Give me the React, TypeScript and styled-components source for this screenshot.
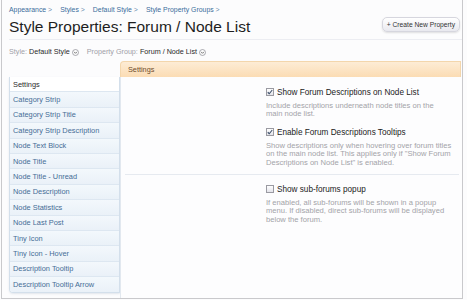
import styled, { createGlobalStyle } from 'styled-components';

const GlobalStyle = createGlobalStyle`
	html, body {
		margin: 0;
		padding: 0;
		background: #fcfcfd;
	}
	body {
		font-family: "Liberation Sans", Arial, sans-serif;
		color: #222;
	}
	* { box-sizing: border-box; }
`;

const Frame = styled.div`
	margin-left: 1px;
	width: 462px;
	height: 299px;
	display: flex;
	flex-direction: column;
	padding: 0 0 0 7px;
	border: 1px solid #c9c9cc;
	border-top: none;
	background: #fcfcfd;
`;

const Header = styled.header`
	padding: 5px 2px 3px 0;
	border-bottom: 1px solid #ecedf2;
`;

const Breadcrumb = styled.nav`
	display: flex;
	gap: 8px;
	font-size: 6.9px;
	line-height: 10px;
	color: #3b6c9c;
	margin-bottom: 2px;
`;

const Crumb = styled.span`
	white-space: nowrap;
	&::after {
		content: ' >';
		color: #6a8bab;
	}
`;

const TitleRow = styled.div`
	display: flex;
	justify-content: space-between;
	align-items: flex-start;
`;

const Title = styled.h1`
	margin: 0;
	font-size: 15.5px;
	line-height: 19px;
	font-weight: normal;
	color: #1e1e1e;
`;

const Button = styled.button`
	height: 15px;
	padding: 0 4px;
	border: 1px solid #d6d6de;
	border-radius: 5px;
	background: linear-gradient(#ffffff, #e9e9ef);
	box-shadow: 0 1px 2px rgba(0, 0, 0, 0.12);
	font-family: inherit;
	font-size: 6.7px;
	color: #333;
	white-space: nowrap;
`;

const StyleBar = styled.div`
	display: flex;
	align-items: center;
	gap: 8px;
	margin-top: 7px;
	font-size: 7.2px;
	line-height: 10px;
`;

const Chooser = styled.span`
	display: inline-flex;
	align-items: center;
	gap: 2px;
	white-space: nowrap;
`;

const ChooserLabel = styled.span`
	color: #a0a0a8;
`;

const ChooserValue = styled.span`
	color: #2a2a2a;
`;

const Main = styled.div`
	flex: 1;
	margin-top: 4px;
	display: grid;
	grid-template-columns: 111px 1fr;
	grid-template-rows: 16px 1fr;
`;

const Tab = styled.div`
	grid-column: 2;
	grid-row: 1;
	margin-right: 1px;
	padding-left: 7px;
	display: flex;
	align-items: center;
	border-top-left-radius: 4px;
	border: 1px solid #f3d6ac;
	border-bottom: none;
	background: linear-gradient(#fdecd5, #fbdcb4);
	font-size: 7.3px;
	color: #6f4d2d;
`;

const Sidebar = styled.ul`
	grid-column: 1;
	grid-row: 2;
	align-self: start;
	margin: 0;
	padding: 0;
	list-style: none;
	border: 1px solid #d3dfeb;
	border-top: none;
	border-bottom-left-radius: 4px;
	box-shadow: 0 1px 2px rgba(80, 110, 140, 0.15);
	overflow: hidden;
`;

const SideItem = styled.li<{ $header?: boolean }>`
	height: 15.4px;
	display: flex;
	align-items: center;
	padding-left: 3px;
	border-bottom: 1px solid #dde7f1;
	font-size: 7.4px;
	white-space: nowrap;
	background: ${p => (p.$header ? '#ffffff' : 'linear-gradient(#f3f8fc, #eaf1f8)')};
	color: ${p => (p.$header ? '#2b2b2b' : '#456d96')};
	&:last-child {
		border-bottom: none;
	}
`;

const Content = styled.section`
	grid-column: 2;
	grid-row: 2;
	padding: 0 3px 0 4px;
	border-left: 1px solid #e2e8ef;
	background: #fdfdfe;
`;

const Group = styled.div<{ $last?: boolean }>`
	padding: ${p => (p.$last ? '8.5px' : '9.5px')} 0 7px 141px;
	border-bottom: ${p => (p.$last ? 'none' : '1px solid #e6eaf0')};
`;

const Option = styled.div`
	& + & {
		margin-top: 8px;
	}
`;

const CheckLabel = styled.label`
	display: flex;
	align-items: center;
	gap: 3px;
	font-size: 8.2px;
	line-height: 11px;
	color: #222;
	white-space: nowrap;
`;

const Box = styled.span`
	width: 8px;
	height: 8px;
	display: inline-flex;
	align-items: center;
	justify-content: center;
	border: 1px solid #9a9aa2;
	background: linear-gradient(#ffffff, #e4e4ea);
`;

const Desc = styled.p`
	margin: 4px 0 0;
	font-size: 7.6px;
	line-height: 8.5px;
	color: #a3a3a8;
	white-space: nowrap;
`;

const ChevronCircle = () => (
	<svg width="7" height="7" viewBox="0 0 14 14">
		<circle cx="7" cy="7" r="6" fill="#fafafa" stroke="#8a8a92" strokeWidth="1.4" />
		<path d="M4.2 5.8 L7 8.6 L9.8 5.8" fill="none" stroke="#555" strokeWidth="1.6" />
	</svg>
);

const Check = ({ checked }: { checked: boolean }) => (
	<Box>
		{checked && (
			<svg width="6" height="6" viewBox="0 0 12 12">
				<path d="M1.5 6.5 L4.5 9.5 L10.5 2" fill="none" stroke="#3d4f6a" strokeWidth="2.2" />
			</svg>
		)}
	</Box>
);

const crumbs = ['Appearance', 'Styles', 'Default Style', 'Style Property Groups'];

const sideItems = [
	'Category Strip',
	'Category Strip Title',
	'Category Strip Description',
	'Node Text Block',
	'Node Title',
	'Node Title - Unread',
	'Node Description',
	'Node Statistics',
	'Node Last Post',
	'Tiny Icon',
	'Tiny Icon - Hover',
	'Description Tooltip',
	'Description Tooltip Arrow',
];

export default function App() {
	return (
		<>
			<GlobalStyle />
			<Frame>
				<Header>
					<Breadcrumb>
						{crumbs.map(c => (
							<Crumb key={c}>{c}</Crumb>
						))}
					</Breadcrumb>
					<TitleRow>
						<Title>Style Properties: Forum / Node List</Title>
						<Button>+ Create New Property</Button>
					</TitleRow>
				</Header>

				<StyleBar>
					<Chooser>
						<ChooserLabel>Style:</ChooserLabel>
						<ChooserValue>Default Style</ChooserValue>
						<ChevronCircle />
					</Chooser>
					<Chooser>
						<ChooserLabel>Property Group:</ChooserLabel>
						<ChooserValue>Forum / Node List</ChooserValue>
						<ChevronCircle />
					</Chooser>
				</StyleBar>

				<Main>
					<Tab>Settings</Tab>
					<Sidebar>
						<SideItem $header>Settings</SideItem>
						{sideItems.map(item => (
							<SideItem key={item}>{item}</SideItem>
						))}
					</Sidebar>
					<Content>
						<Group>
							<Option>
								<CheckLabel>
									<Check checked />
									Show Forum Descriptions on Node List
								</CheckLabel>
								<Desc>
									Include descriptions underneath node titles on the
									<br />
									main node list.
								</Desc>
							</Option>
							<Option>
								<CheckLabel>
									<Check checked />
									Enable Forum Descriptions Tooltips
								</CheckLabel>
								<Desc>
									Show descriptions only when hovering over forum titles
									<br />
									on the main node list. This applies only if "Show Forum
									<br />
									Descriptions on Node List" is enabled.
								</Desc>
							</Option>
						</Group>
						<Group $last>
							<Option>
								<CheckLabel>
									<Check checked={false} />
									Show sub-forums popup
								</CheckLabel>
								<Desc>
									If enabled, all sub-forums will be shown in a popup
									<br />
									menu. If disabled, direct sub-forums will be displayed
									<br />
									below the forum.
								</Desc>
							</Option>
						</Group>
					</Content>
				</Main>
			</Frame>
		</>
	);
}
